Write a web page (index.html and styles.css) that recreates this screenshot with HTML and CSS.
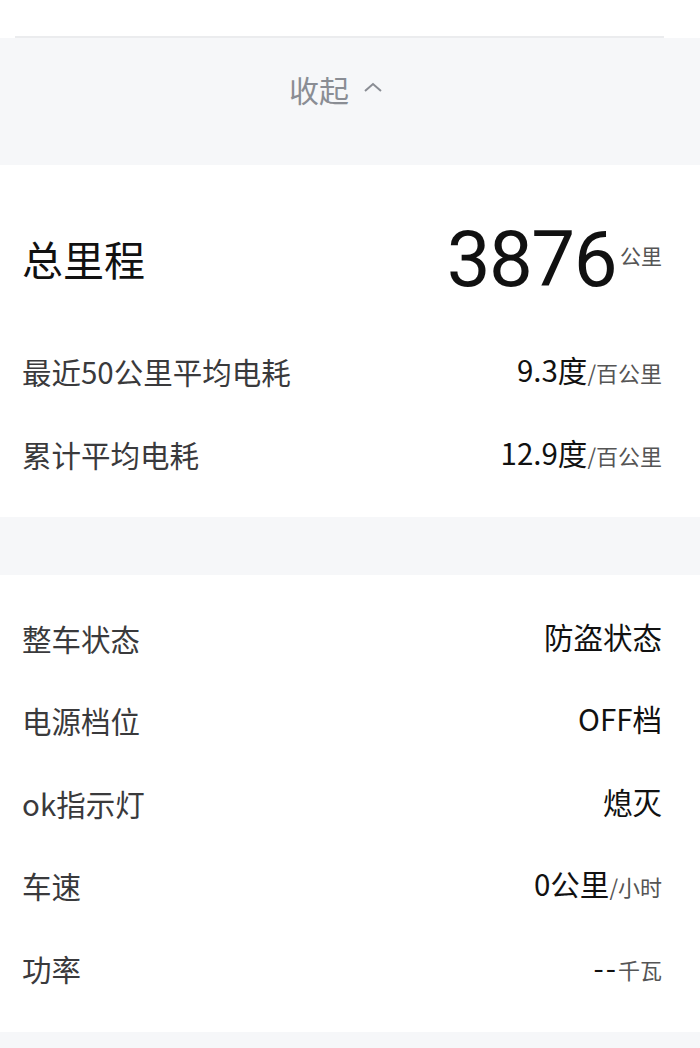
FILE: index.html
```html
<!DOCTYPE html>
<html lang="zh">
<head>
<meta charset="utf-8">
<link rel="stylesheet" href="styles.css">
</head>
<body>
<div class="page">
  <div class="top"></div>
  <div class="divider"></div>
  <div class="collapse">
    <span class="collapse-text">收起</span>
    <svg class="chev" width="20" height="12" viewBox="0 0 20 12"><path d="M2 10 L10 3 L18 10" fill="none" stroke="#8a8d94" stroke-width="2"/></svg>
  </div>
  <div class="card card1">
    <div class="total">
      <span class="total-label">总里程</span>
      <span class="total-value"><span class="big">3876</span><span class="big-unit">公里</span></span>
    </div>
    <div class="row"><span class="label">最近50公里平均电耗</span><span class="value">9.3度<span class="unit">/百公里</span></span></div>
    <div class="row"><span class="label">累计平均电耗</span><span class="value">12.9度<span class="unit">/百公里</span></span></div>
  </div>
  <div class="gap"></div>
  <div class="card card2">
    <div class="row"><span class="label">整车状态</span><span class="value">防盗状态</span></div>
    <div class="row"><span class="label">电源档位</span><span class="value">OFF档</span></div>
    <div class="row"><span class="label">ok指示灯</span><span class="value">熄灭</span></div>
    <div class="row"><span class="label">车速</span><span class="value">0公里<span class="unit">/小时</span></span></div>
    <div class="row"><span class="label">功率</span><span class="value"><span class="dash">--</span><span class="unit">千瓦</span></span></div>
  </div>
  <div class="bottom"></div>
</div>
</body>
</html>
```
FILE: styles.css
```css
html, body {
  margin: 0;
  padding: 0;
  background: #ffffff;
}
.page {
  width: 700px;
  height: 1048px;
  overflow: hidden;
  font-family: "Noto Sans CJK SC", "Noto Sans", sans-serif;
  display: flex;
  flex-direction: column;
}
.top {
  height: 36px;
  background: #ffffff;
}
.divider {
  height: 2px;
  background: #ebecee;
  margin: 0 36px 0 15px;
}
.collapse {
  height: 127px;
  background: #f6f7f9;
  display: flex;
  align-items: center;
  justify-content: center;
  gap: 14px;
  padding-right: 28px;
  padding-bottom: 26px;
  box-sizing: border-box;
}
.collapse-text {
  font-size: 30px;
  color: #8a8d94;
  line-height: 1;
}
.chev {
  margin-top: -4px;
}
.card {
  background: #ffffff;
  padding: 0 38px 0 22px;
  display: flex;
  flex-direction: column;
}
.card1 {
  height: 352px;
  box-sizing: border-box;
  padding-top: 40px;
}
.total {
  height: 110px;
  margin-bottom: 15px;
  display: flex;
  align-items: center;
  justify-content: space-between;
}
.total-label {
  font-size: 41px;
  color: #111111;
  line-height: 1;
  margin-top: -4px;
}
.total-value {
  display: flex;
  align-items: flex-start;
}
.big {
  font-family: Roboto, "Noto Sans", sans-serif;
  font-size: 78px;
  line-height: 1;
  color: #111111;
  letter-spacing: -1.5px;
}
.big-unit {
  font-size: 21px;
  color: #555555;
  margin-top: 24px;
  margin-left: 4px;
  line-height: 1;
}
.row {
  height: 83px;
  display: flex;
  align-items: center;
  justify-content: space-between;
}
.card2 .row {
  height: 82.5px;
}
.label {
  font-size: 29.5px;
  color: #3a3a3c;
  line-height: 1;
}
.value {
  font-size: 29.5px;
  color: #111111;
  line-height: 1;
  margin-top: -4px;
}
.unit {
  font-size: 22px;
  color: #555555;
}
.dash {
  letter-spacing: 2px;
}
.gap {
  height: 58px;
  background: #f6f7f9;
}
.card2 {
  height: 457px;
  box-sizing: border-box;
  padding-top: 22px;
  padding-bottom: 22px;
}
.bottom {
  flex: 1;
  background: #f6f7f9;
}
```
